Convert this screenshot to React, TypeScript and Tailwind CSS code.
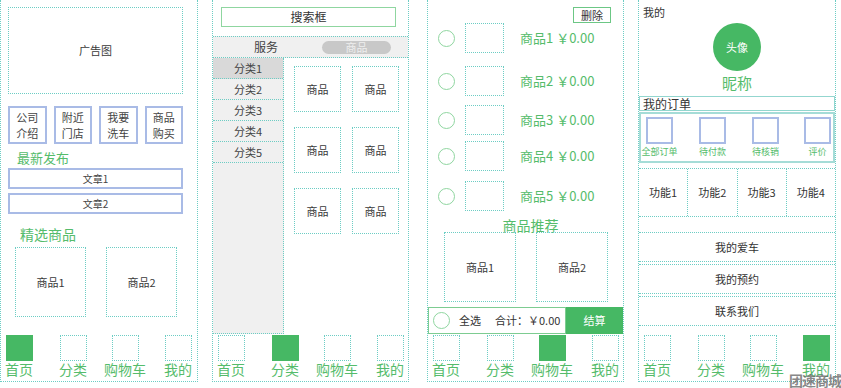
import clsx from "clsx";

const dot = "border-dotted border-[#6dcdc4]";
const green = "text-[#55bc6b]";

function Nav({ active }: { active: number }) {
  const items = ["首页", "分类", "购物车", "我的"];
  const gaps = ["ml-0", "ml-[18px]", "ml-[16px]", "ml-[17px]"];
  return (
    <div className="mt-auto flex pb-[4px]">
      {items.map((label, i) => (
        <div key={label} className={clsx("flex w-[36px] flex-col items-center", gaps[i])}>
          <div
            className={clsx(
              "h-[26px] w-[27px]",
              i === active ? "bg-[#46b864]" : clsx("border", dot)
            )}
          />
          <span className={clsx("whitespace-nowrap text-[14px] leading-[16px]", green)}>{label}</span>
        </div>
      ))}
    </div>
  );
}

function Box({ className, children }: { className?: string; children?: React.ReactNode }) {
  return (
    <div className={clsx("flex items-center justify-center border text-[11px] text-[#3a3a3a]", dot, className)}>
      {children}
    </div>
  );
}

function HomePanel() {
  const entries = [
    ["公司", "介绍"],
    ["附近", "门店"],
    ["我要", "洗车"],
    ["商品", "购买"],
  ];
  return (
    <div className={clsx("flex h-[382px] w-[198px] flex-col border-x border-b", dot)}>
      <Box className="ml-[7px] mt-[7px] h-[87px] w-[175px]">广告图</Box>
      <div className="ml-[7px] mt-[12px] grid h-[38px] w-[175px] grid-cols-4 gap-[7px]">
        {entries.map(([a, b]) => (
          <div
            key={a + b}
            className="flex flex-col items-center justify-center border-2 border-[#a9bbe6] text-[11px] leading-[16px] text-[#444]"
          >
            <span>{a}</span>
            <span>{b}</span>
          </div>
        ))}
      </div>
      <div className={clsx("ml-[16px] mt-[6px] text-[13px] leading-[16px]", green)}>最新发布</div>
      <div className="ml-[7px] mt-[2px] flex h-[21px] w-[175px] items-center justify-center border-2 border-[#a9bbe6] text-[10px] text-[#444]">
        文章1
      </div>
      <div className="ml-[7px] mt-[4px] flex h-[21px] w-[175px] items-center justify-center border-2 border-[#a9bbe6] text-[10px] text-[#444]">
        文章2
      </div>
      <div className={clsx("ml-[19px] mt-[12px] text-[14px] leading-[16px]", green)}>精选商品</div>
      <div className="ml-[14px] mt-[5px] flex gap-[20px]">
        <Box className="h-[70px] w-[71px]">商品1</Box>
        <Box className="h-[70px] w-[71px]">商品2</Box>
      </div>
      <Nav active={0} />
    </div>
  );
}

function CategoryPanel() {
  return (
    <div className={clsx("ml-[14px] flex h-[382px] w-[197px] flex-col border-x border-b", dot)}>
      <div className="ml-[8px] mt-[7px] flex h-[20px] w-[175px] items-center justify-center border border-[#8fd6a0] text-[12px] text-[#333]">
        搜索框
      </div>
      <div className={clsx("mt-[9px] flex h-[22px] items-center border-y bg-[#f0f0f0]", dot)}>
        <span className="w-[106px] text-center text-[12px] text-[#444]">服务</span>
        <span className="ml-[3px] flex h-[13px] w-[69px] items-center justify-center rounded-full bg-[#c8c8c8] text-[11px] text-[#eee]">
          商品
        </span>
      </div>
      <div className="flex h-[276px]">
        <div className={clsx("w-[71px] border-r border-b bg-[#f0f0f0]", dot)}>
          {[1, 2, 3, 4, 5].map((n) => (
            <div
              key={n}
              className={clsx(
                "flex h-[21px] items-center justify-center border-b text-[11px] text-[#444]",
                dot,
                n === 1 && "bg-[#d9d9d9]"
              )}
            >
              分类{n}
            </div>
          ))}
        </div>
        <div className="ml-[10px] mt-[8px] grid h-[168px] grid-cols-[47px_47px] gap-x-[11px] gap-y-[15px]">
          {Array.from({ length: 6 }).map((_, i) => (
            <Box key={i} className="h-[46px] w-[47px]">商品</Box>
          ))}
        </div>
      </div>
      <Nav active={1} />
    </div>
  );
}

function CartPanel() {
  const rowGaps = ["mt-0", "mt-[13px]", "mt-[9px]", "mt-[6px]", "mt-[10px]"];
  return (
    <div className={clsx("ml-[18px] flex h-[382px] w-[197px] flex-col border-x border-b", dot)}>
      <div className="mt-[7px] flex justify-end pr-[12px]">
        <div className="flex h-[16px] w-[38px] items-center justify-center border border-[#6cc785] text-[11px] text-[#333]">
          删除
        </div>
      </div>
      {[1, 2, 3, 4, 5].map((n, i) => (
        <div key={n} className={clsx("flex h-[30px] items-center", rowGaps[i])}>
          <div className="ml-[10px] h-[17px] w-[17px] rounded-full border-[1.5px] border-[#8fd6a0]" />
          <div className={clsx("ml-[10px] h-[30px] w-[39px] border", dot)} />
          <span className={clsx("ml-[16px] text-[13px]", green)}>
            商品{n} ￥0.00
          </span>
        </div>
      ))}
      <div className={clsx("mt-[7px] pl-[10px] text-center text-[14px] leading-[14px]", green)}>商品推荐</div>
      <div className="ml-[16px] flex gap-[20px]">
        <Box className="h-[70px] w-[72px]">商品1</Box>
        <Box className="h-[70px] w-[72px]">商品2</Box>
      </div>
      <div className="mt-[5px] flex h-[27px]">
        <div className="flex w-[138px] items-center border border-[#7dcc91] text-[11px] text-[#333]">
          <div className="ml-[4px] h-[17px] w-[17px] rounded-full border-[1.5px] border-[#8fd6a0]" />
          <span className="ml-[9px]">全选</span>
          <span className="ml-[14px]">合计：￥0.00</span>
        </div>
        <div className="flex flex-1 items-center justify-center bg-[#46b864] text-[11px] text-white">结算</div>
      </div>
      <Nav active={2} />
    </div>
  );
}

function MinePanel() {
  const orders = ["全部订单", "待付款", "待核销", "评价"];
  const orderGaps = ["ml-[5px]", "ml-[26px]", "ml-[26px]", "ml-[25px]"];
  return (
    <div className={clsx("relative ml-[14px] flex h-[382px] w-[198px] flex-col border-x border-b", dot)}>
      <div className="pl-[4px] pt-[6px] text-[11px] leading-[12px] text-[#333]">我的</div>
      <div className="mt-[5px] flex h-[48px] w-[48px] items-center justify-center self-center rounded-full bg-[#46b864] text-[11px] text-white">
        头像
      </div>
      <div className={clsx("mt-[3px] text-center text-[15px] leading-[18px]", green)}>昵称</div>
      <div className="mt-[4px] flex h-[15px] items-center border border-[#93d6cf] pl-[3px] text-[12px] text-[#333]">
        我的订单
      </div>
      <div className="mt-[1px] flex h-[51px] border-2 border-[#a5dcd7] pt-[3px]">
        {orders.map((o, i) => (
          <div key={o} className={clsx("flex w-[27px] flex-col items-center", orderGaps[i])}>
            <div className="h-[27px] w-[27px] border-2 border-[#a9bbe6]" />
            <span className={clsx("mt-[2px] whitespace-nowrap text-[9px] leading-[12px]", green)}>{o}</span>
          </div>
        ))}
      </div>
      <div className={clsx("mt-[5px] flex h-[49px] border-y", dot)}>
        {[1, 2, 3, 4].map((n) => (
          <div
            key={n}
            className={clsx(
              "flex flex-1 items-center justify-center text-[11px] text-[#333]",
              n < 4 && clsx("border-r", dot)
            )}
          >
            功能{n}
          </div>
        ))}
      </div>
      <div className={clsx("h-[16px] border-b", dot)} />
      <div className={clsx("flex h-[29px] items-center justify-center border-b text-[11px] text-[#333]", dot)}>我的爱车</div>
      <div className={clsx("mt-[2px] flex h-[30px] items-center justify-center border-y text-[11px] text-[#333]", dot)}>我的预约</div>
      <div className={clsx("mt-[2px] flex h-[30px] items-center justify-center border-y text-[11px] text-[#333]", dot)}>联系我们</div>
      <Nav active={3} />
    </div>
  );
}

export default function App() {
  return (
    <div className="relative h-[388px] w-[841px] overflow-hidden bg-white font-['Noto_Sans_CJK_SC',sans-serif]">
      <div className="flex">
        <HomePanel />
        <CategoryPanel />
        <CartPanel />
        <MinePanel />
      </div>
      <div className="absolute bottom-0 right-0 text-[14px] font-bold leading-[15px] tracking-[-1px] text-[#6b6b6b] opacity-80">
        团速商城
      </div>
    </div>
  );
}
